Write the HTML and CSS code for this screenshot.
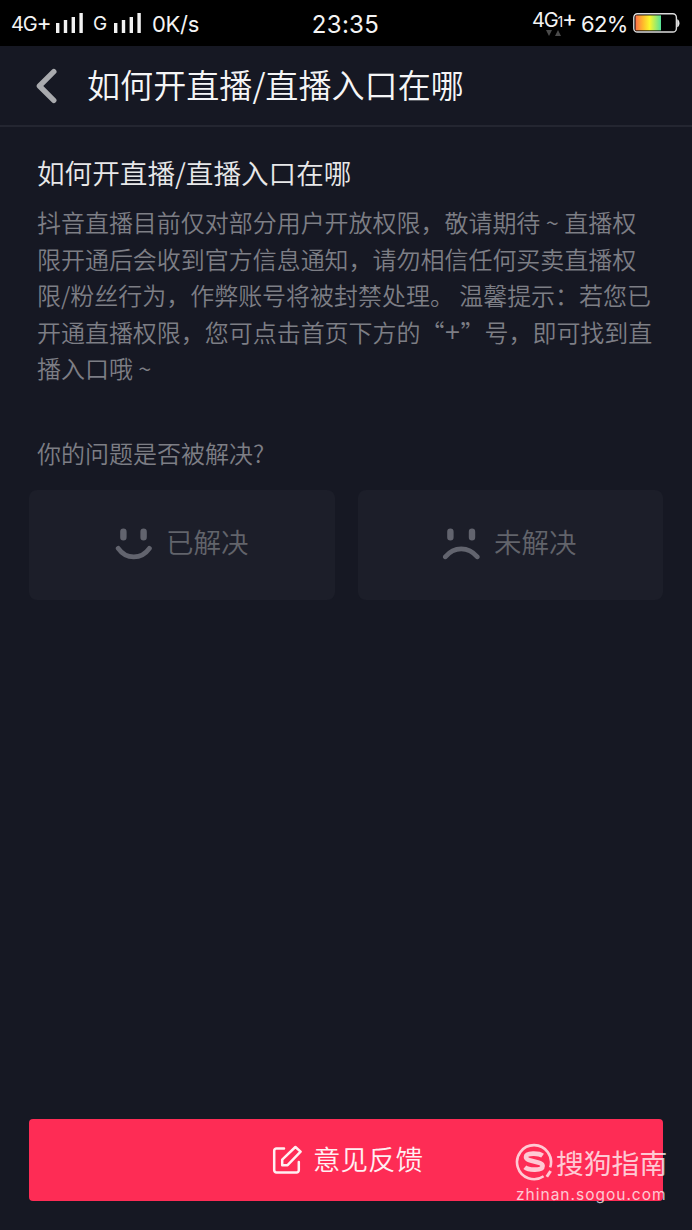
FILE: index.html
```html
<!DOCTYPE html>
<html lang="zh-CN">
<head>
<meta charset="utf-8">
<title>如何开直播/直播入口在哪</title>
<link rel="stylesheet" href="styles.css">
</head>
<body>
<div class="screen">
  <div class="status">
    <div class="status-left">
      <span class="net">4G<span class="wide-plus">+</span></span>
      <svg class="bars" width="27" height="20" viewBox="0 0 27 20" fill="#f2f2f2"><path d="M0 10h3.4v10H0zM7.8 7h3.4v13H7.8zM15.6 4H19v16h-3.4zM23.4 0h3.4v20h-3.4z"/></svg>
      <span class="g">G</span>
      <svg class="bars" width="27" height="20" viewBox="0 0 27 20" fill="#f2f2f2"><path d="M0 10h3.4v10H0zM7.8 7h3.4v13H7.8zM15.6 4H19v16h-3.4zM23.4 0h3.4v20h-3.4z"/></svg>
      <span class="speed">0K/s</span>
    </div>
    <div class="clock">23:35</div>
    <div class="status-right">
      <span class="data">4G<small>1</small><span class="wide-plus">+</span>
        <svg class="arrows" width="16" height="6" viewBox="0 0 16 6" fill="#4b4b4b"><path d="M0 0h6L3 6zM12 0l3 6H9z"/></svg>
      </span>
      <span class="percent">62%</span>
      <svg class="battery" width="47" height="20" viewBox="0 0 47 20">
        <defs><linearGradient id="charge"><stop offset="0" stop-color="#ff7048"/><stop offset=".28" stop-color="#ffb62c"/><stop offset=".55" stop-color="#fbf52c"/><stop offset="1" stop-color="#55e39a"/></linearGradient></defs>
        <rect x=".8" y=".8" width="42.6" height="18.2" rx="3.6" fill="none" stroke="#dcdcdc" stroke-width="1.4"/>
        <path d="M2.5 2.4H28v15H2.5z" fill="url(#charge)"/>
        <path d="M44.2 6.2c3 .8 3 7.4 0 8z" fill="#e8e8e8"/>
      </svg>
    </div>
  </div>
  <header class="header">
    <svg class="back" width="22" height="36" viewBox="0 0 22 36" fill="none" stroke="#a9aaae" stroke-width="5.4" stroke-linecap="round" stroke-linejoin="round"><path d="M18.8 3.7 4.4 18l14.4 14.3"/></svg>
    <h1>如何开直播/直播入口在哪</h1>
  </header>
  <main class="content">
    <h2>如何开直播/直播入口在哪</h2>
    <p class="answer">抖音直播目前仅对部分用户开放权限，敬请期待<span class="tilde">~</span>直播权<br>限开通后会收到官方信息通知，请勿相信任何买卖直播权<br>限/粉丝行为，作弊账号将被封禁处理。 温馨提示：若您已<br>开通直播权限，您可点击首页下方的<span class="quote open">“</span><span class="plus">+</span><span class="quote">”</span>号，即可找到直<br>播入口哦<span class="tilde">~</span></p>
    <p class="question">你的问题是否被解决?</p>
    <div class="choices">
      <div class="choice">
        <svg class="face" width="38" height="34" viewBox="0 0 38 34" fill="none" stroke="#62646e" stroke-linecap="round"><path d="M8.4 4.8v5.4M28.6 4.8v5.4" stroke-width="6.4"/><path d="M3.2 21.4c8 11.4 23.2 11.4 31.2 0" stroke-width="4.8"/></svg>
        <span>已解决</span>
      </div>
      <div class="choice">
        <svg class="face" width="38" height="34" viewBox="0 0 38 34" fill="none" stroke="#62646e" stroke-linecap="round"><path d="M8.4 4.8v5.4M30 4.8v5.4" stroke-width="6.4"/><path d="M3.4 29.8c8.6-10.6 23-10.6 31.8 0" stroke-width="4.8"/></svg>
        <span>未解决</span>
      </div>
    </div>
  </main>
  <footer class="footer">
    <div class="feedback">
      <svg width="30" height="30" viewBox="0 0 30 30" fill="none" stroke="#fff0f2" stroke-width="2.5" stroke-linecap="round" stroke-linejoin="round"><path d="M12 3.6H4.4A2.2 2.2 0 0 0 2.2 5.8v19.4a2.2 2.2 0 0 0 2.2 2.2h20.2a2.2 2.2 0 0 0 2.2-2.2V17"/><path d="m23.4 2 5.2 4.6-13 13.6h-5.4v-5.6z"/></svg>
      <span>意见反馈</span>
    </div>
    <div class="watermark">
      <div class="brand">
        <svg width="38" height="38" viewBox="0 0 38 38" fill="none" stroke="currentColor"><path d="M28.6 33.2A17 17 0 1 1 35.2 24.4" stroke-width="2.6"/><path d="M27.6 12.6c-3.6-2.6-16.6-3.2-16.6 1.4 0 5.2 16.6 3.6 16.6 8.9 0 5.1-14.2 4.4-17.8 1.4" stroke-width="4.6"/><path d="m35.6 28-3.8 5.8" stroke-width="3"/></svg>
        <span>搜狗指南</span>
      </div>
      <div class="site">zhinan.sogou.com</div>
    </div>
  </footer>
</div>
</body>
</html>
```
FILE: styles.css
```css
* { box-sizing: border-box; }

body {
  margin: 0;
  background: #161823;
  font-family: "Noto Sans CJK SC", sans-serif;
  font-weight: 350;
}

h1, h2, p { margin: 0; font-weight: 350; white-space: nowrap; }
svg { display: block; flex: none; }

.screen {
  width: 692px;
  height: 1230px;
  display: flex;
  flex-direction: column;
  overflow: hidden;
}

.status {
  height: 46px;
  padding: 1px 12px 0 11px;
  background: #000;
  color: #f4f4f4;
  display: grid;
  grid-template-columns: 1fr auto 1fr;
  align-items: center;
  font-family: Inter, Roboto, sans-serif;
  font-weight: 400;
  line-height: 30px;
  white-space: nowrap;
}

.status-left, .status-right { display: flex; align-items: center; }
.status-right { justify-content: flex-end; }
.net { width: 45px; font-size: 20px; letter-spacing: -1.2px; }
.wide-plus { font-size: 23px; line-height: 1; }
.bars { margin-top: -1px; }
.g { width: 31px; padding-left: 10px; font-size: 19px; }
.speed { margin-left: 11px; font-size: 22px; letter-spacing: -.3px; }
.clock { font-size: 24px; letter-spacing: .3px; padding-top: 2px; }
.data { position: relative; width: 48px; font-size: 20px; letter-spacing: -1.2px; margin-top: -6px; }
.data small { font-size: 14px; }
.arrows { position: absolute; left: 14px; top: 25px; }
.percent { width: 53px; font-size: 22px; letter-spacing: -.6px; padding-left: 1px; }
.battery { margin-top: -1px; }

.header {
  height: 81px;
  padding-left: 35px;
  display: flex;
  align-items: center;
  border-bottom: 2px solid #242631;
}
.header h1 { margin: -4px 0 0 30px; color: #f5f5f6; font-size: 33.1px; line-height: 50px; }

.content { flex: 1; padding: 25px 29px 0; }
.content h2 { padding-left: 8px; color: #e8e8e9; font-size: 27.6px; line-height: 40px; }
.answer { padding: 12px 0 0 8px; color: #7d7e85; font-size: 23.97px; line-height: 36.5px; }
.answer span { display: inline-block; }
.tilde { width: 24px; text-align: center; }
.quote { width: 24px; }
.open { text-align: right; padding-right: 1px; }
.plus { width: 16px; text-align: center; font-size: 27px; line-height: 1; }
.question { margin-top: 48px; padding-left: 8px; color: #7d7e85; font-size: 24px; line-height: 36px; }

.choices { margin-top: 19px; display: grid; grid-template-columns: 306px 305px; gap: 23px; }
.choice {
  height: 110px;
  border-radius: 8px;
  background: #1c1e29;
  color: #62646b;
  display: flex;
  align-items: center;
  padding: 0 0 4px 86px;
  font-size: 27.5px;
}
.choice span { margin: -3px 0 0 -1px; }
.choice:last-child { padding-left: 84px; }
.choice:last-child span { margin-left: 0; }
.face { margin: 3px 14px 0 0; }

.footer { position: relative; padding: 0 29px 29px; }
.feedback {
  height: 82px;
  border-radius: 4px;
  background: #fe2c55;
  color: #fff0f2;
  display: flex;
  align-items: center;
  padding-left: 243px;
  gap: 11px;
  font-size: 27.5px;
}
.feedback span { margin-top: -4px; }
.watermark { position: absolute; left: 515px; top: 23px; color: rgba(255, 255, 255, .75); }
.brand { display: flex; align-items: center; gap: 3px; height: 40px; font-size: 27.8px; font-weight: 400; white-space: nowrap; }
.brand span { margin-top: -1px; }
.site { font: 400 15.5px/20px Inter, sans-serif; letter-spacing: 1px; margin: 3px 0 0 1px; }
```
